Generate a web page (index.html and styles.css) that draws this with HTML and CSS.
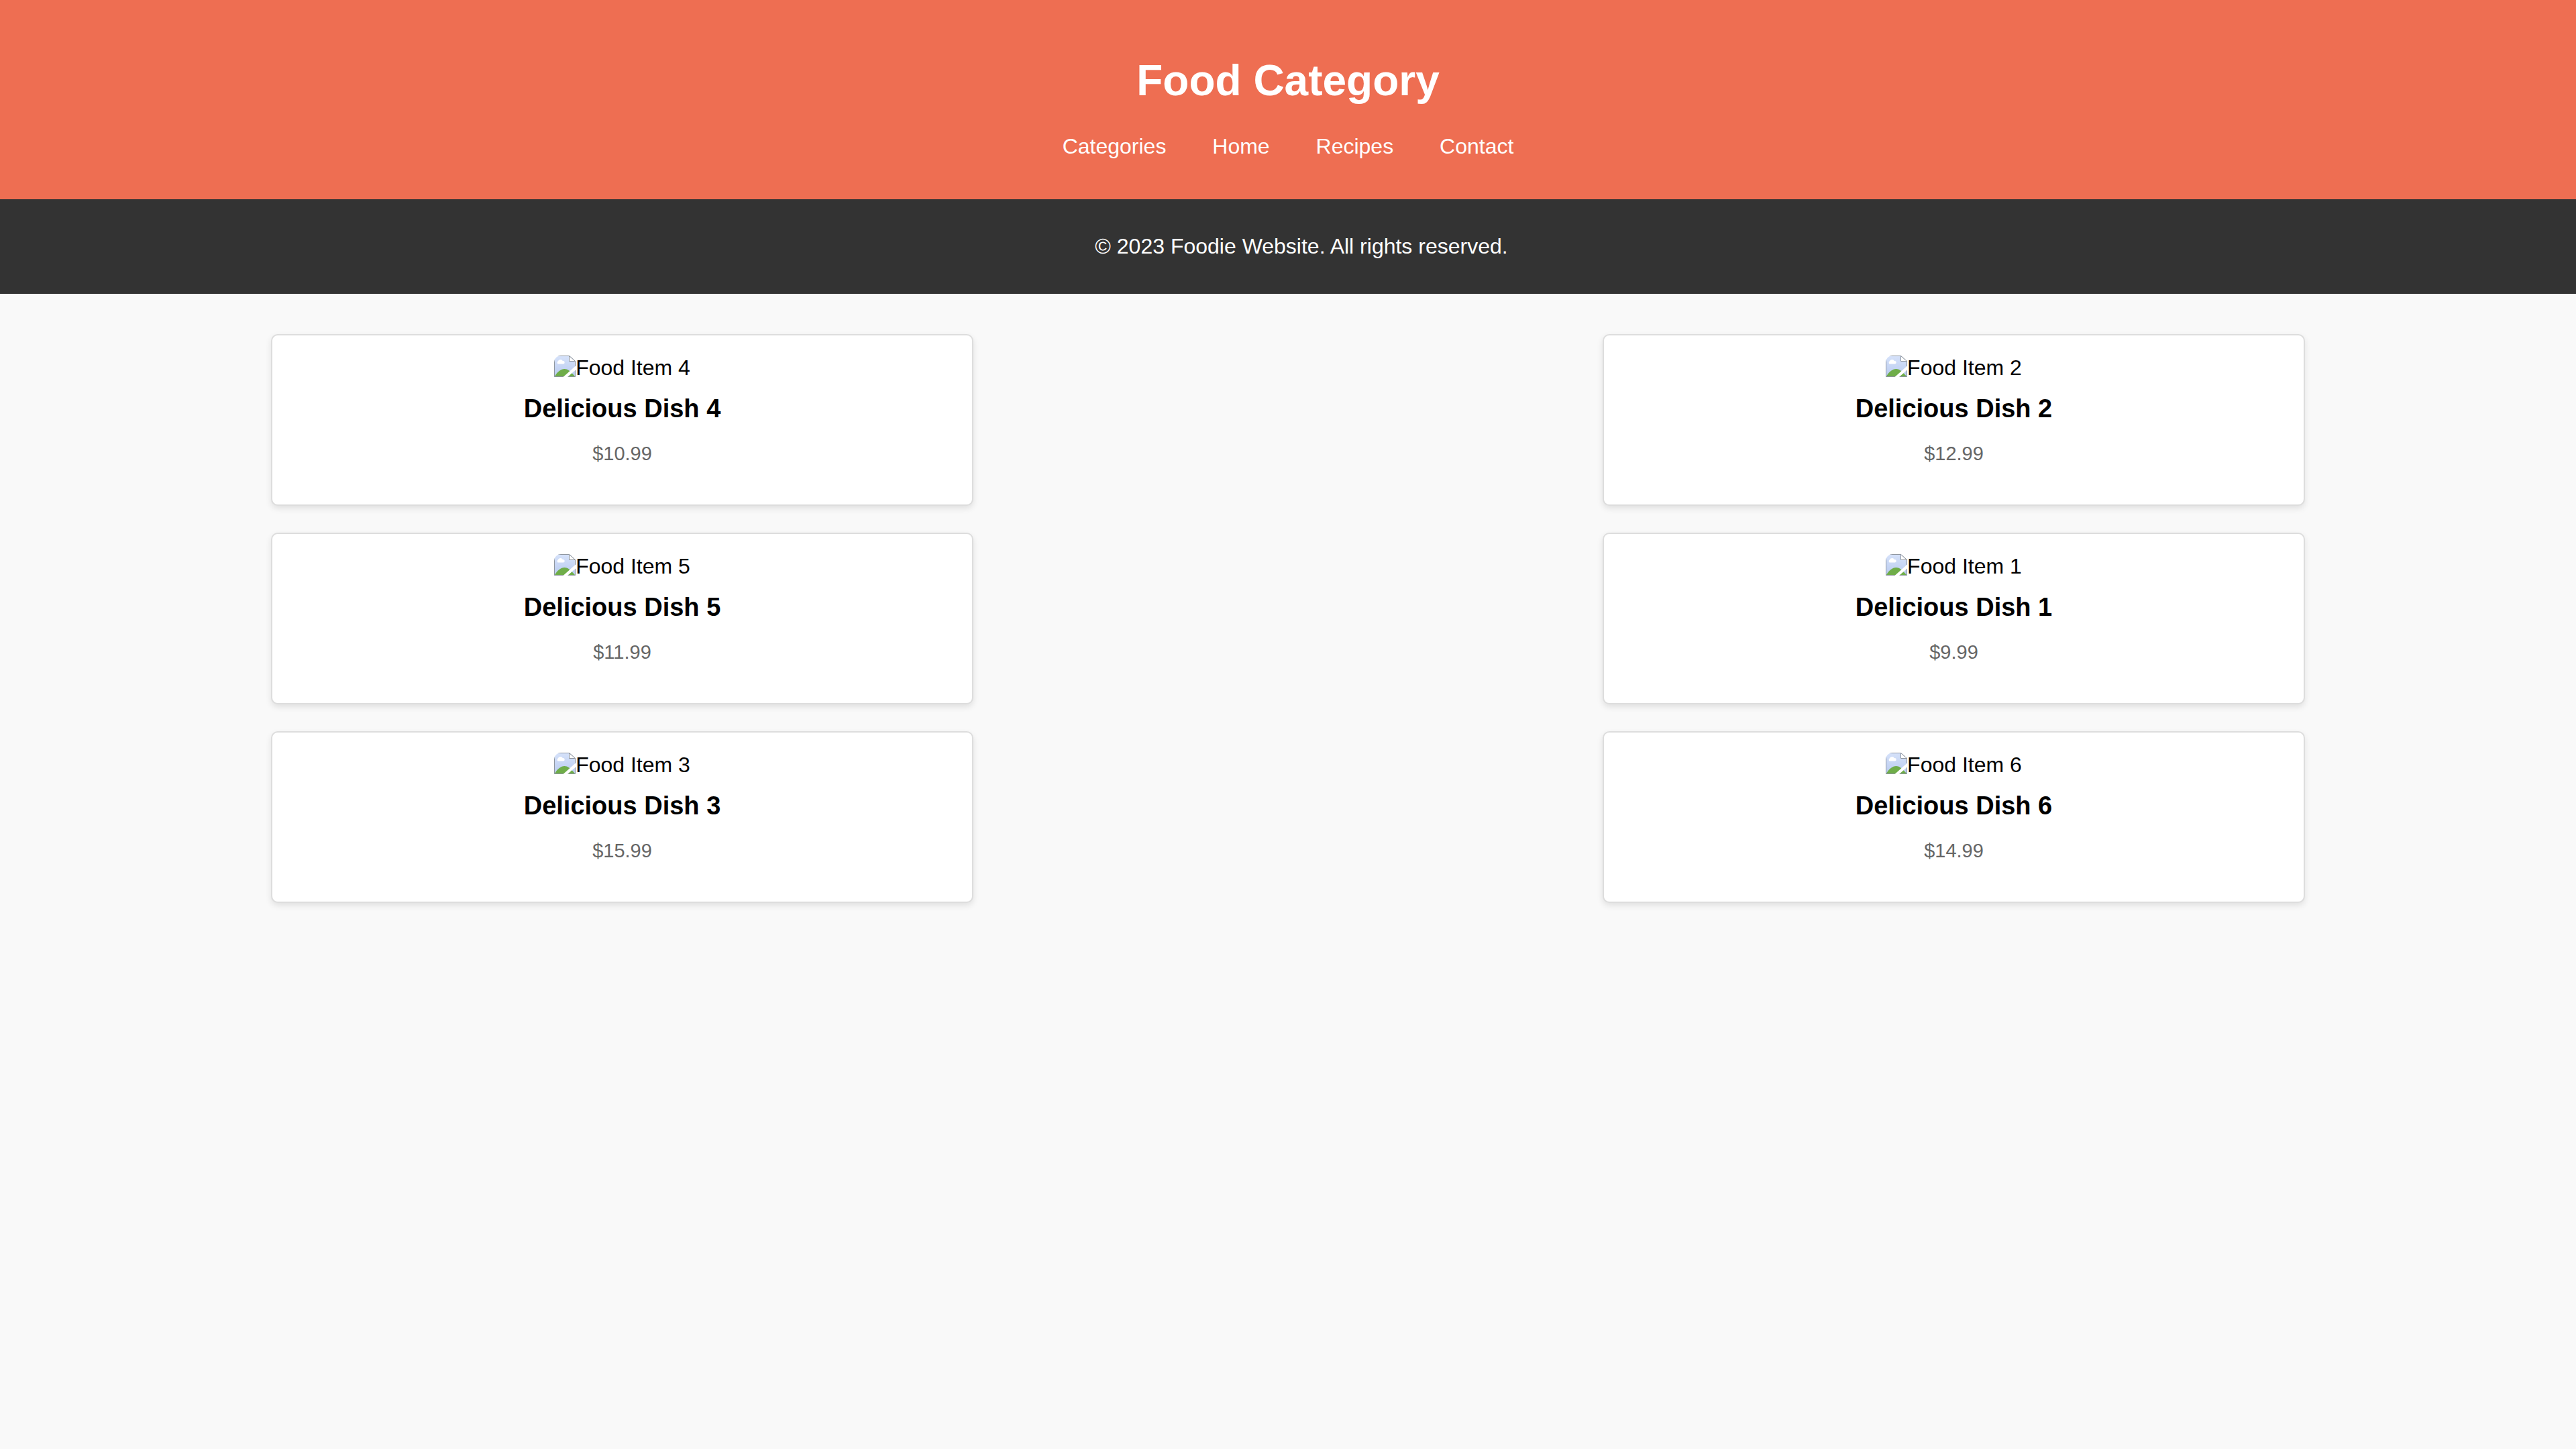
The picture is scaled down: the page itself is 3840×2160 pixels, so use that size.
FILE: index.html
```html
<!DOCTYPE html>
<html lang="en">
<head>
<meta charset="utf-8">
<meta name="viewport" content="width=device-width, initial-scale=1">
<title>Food Category</title>
<link rel="stylesheet" href="styles.css">
</head>
<body>
<svg class="defs" width="0" height="0" aria-hidden="true">
  <defs>
    <linearGradient id="sky" x1="0" y1="0" x2="0" y2="1">
      <stop offset="0" stop-color="#d6e2fa"/>
      <stop offset="1" stop-color="#b9cbef"/>
    </linearGradient>
    <symbol id="placeholder" viewBox="0 0 32 32">
      <path d="M0 0H22.500L32 8.500V32H0Z" fill="url(#sky)"/>
      <path d="M5.500 12.500A2.500 2.500 0 0 1 5.700 8.600A4 4 0 0 1 13 8.200A2.200 2.200 0 0 1 14 12.500Z" fill="#fff"/>
      <path d="M1 31C5 24 10 20 15.500 20C20 20 24 23 31 31Z" fill="#6fad49"/>
      <path d="M0.500 31.500V0.500H22.500L31.500 8.500V31.500Z" fill="none" stroke="#8f969f" stroke-width="1"/>
      <path d="M22.500 0.500V8.500H31.500Z" fill="#fff" stroke="#8f969f" stroke-width="1"/>
      <path d="M32 15.500L13.500 32H20L32 21.500Z" fill="#fff"/>
    </symbol>
  </defs>
</svg>

<header class="site-header">
  <h1 class="site-title">Food Category</h1>
  <nav>
    <ul class="nav-list">
      <li class="nav-item"><a class="nav-link" href="#categories">Categories</a></li>
      <li class="nav-item"><a class="nav-link" href="#home">Home</a></li>
      <li class="nav-item"><a class="nav-link" href="#recipes">Recipes</a></li>
      <li class="nav-item"><a class="nav-link" href="#contact">Contact</a></li>
    </ul>
  </nav>
</header>

<footer class="site-footer">
  <p class="copyright">© 2023 Foodie Website. All rights reserved.</p>
</footer>

<main class="menu">
  <article class="card">
    <div class="photo"><svg class="photo-icon" aria-hidden="true"><use href="#placeholder"/></svg><span>Food Item 4</span></div>
    <h3 class="dish">Delicious Dish 4</h3>
    <p class="price">$10.99</p>
  </article>
  <article class="card">
    <div class="photo"><svg class="photo-icon" aria-hidden="true"><use href="#placeholder"/></svg><span>Food Item 2</span></div>
    <h3 class="dish">Delicious Dish 2</h3>
    <p class="price">$12.99</p>
  </article>
  <article class="card">
    <div class="photo"><svg class="photo-icon" aria-hidden="true"><use href="#placeholder"/></svg><span>Food Item 5</span></div>
    <h3 class="dish">Delicious Dish 5</h3>
    <p class="price">$11.99</p>
  </article>
  <article class="card">
    <div class="photo"><svg class="photo-icon" aria-hidden="true"><use href="#placeholder"/></svg><span>Food Item 1</span></div>
    <h3 class="dish">Delicious Dish 1</h3>
    <p class="price">$9.99</p>
  </article>
  <article class="card">
    <div class="photo"><svg class="photo-icon" aria-hidden="true"><use href="#placeholder"/></svg><span>Food Item 3</span></div>
    <h3 class="dish">Delicious Dish 3</h3>
    <p class="price">$15.99</p>
  </article>
  <article class="card">
    <div class="photo"><svg class="photo-icon" aria-hidden="true"><use href="#placeholder"/></svg><span>Food Item 6</span></div>
    <h3 class="dish">Delicious Dish 6</h3>
    <p class="price">$14.99</p>
  </article>
</main>
</body>
</html>
```

FILE: styles.css
```css
body {
  margin: 0;
  background: #f9f9f9;
  color: #000;
  font-family: "Liberation Sans", Arial, sans-serif;
  font-size: 32px;
  line-height: 37px;
}

.defs {
  position: absolute;
}

.site-header {
  padding: 40px;
  background: #ee6e52;
  color: #fff;
  text-align: center;
}

.site-title {
  margin: 0;
  padding: 43px 0;
  font-size: 64px;
  line-height: 74px;
}

.nav-list {
  margin: 0;
  padding: 0 0 20px;
  list-style: none;
}

.nav-item {
  display: inline-block;
  margin: 0 30px;
}

.nav-link {
  color: #fff;
  text-decoration: none;
}

.site-footer {
  padding: 20px 0 20px 40px;
  background: #333;
  color: #fff;
  text-align: center;
}

.copyright {
  margin: 0;
  padding: 32px 0;
}

.menu {
  display: flex;
  flex-wrap: wrap;
  justify-content: space-between;
  width: 80%;
  margin: 0 auto;
  padding: 40px 0;
}

.card {
  width: 32%;
  margin: 20px;
  padding: 30px;
  border: 2px solid #ddd;
  border-radius: 10px;
  background: #fff;
  box-shadow: 0 4px 10px rgba(0, 0, 0, 0.1);
  text-align: center;
}

.photo {
  display: flex;
  justify-content: center;
}

.photo-icon {
  width: 32px;
  height: 32px;
  border-top-left-radius: 10px;
}

.dish {
  margin: 20px 0 0;
  font-size: 38px;
  line-height: 44px;
}

.price {
  margin: 29px 0;
  color: #666;
  font-size: 29px;
  line-height: 33px;
}
```
